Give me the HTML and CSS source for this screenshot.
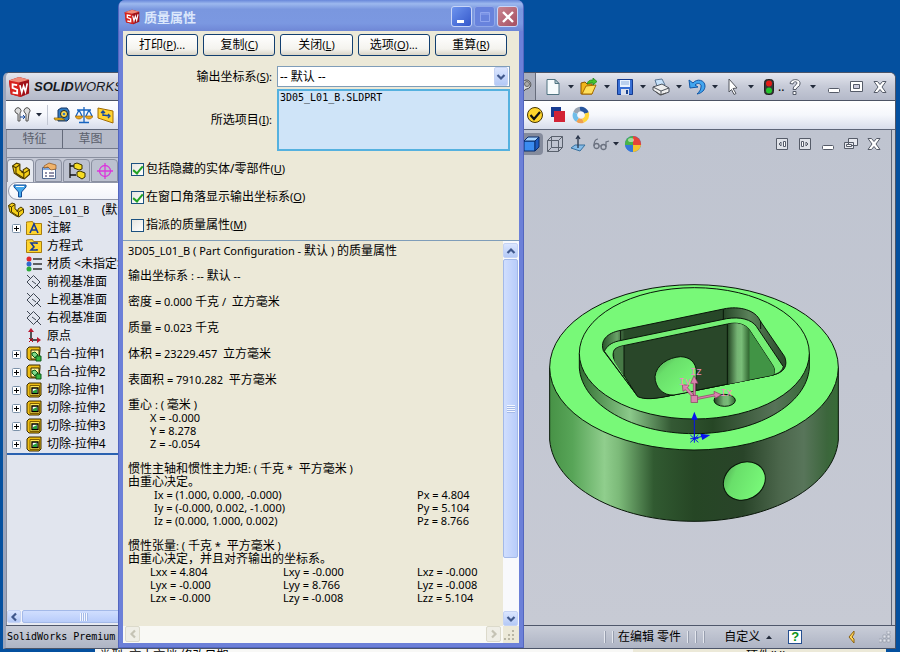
FILE: index.html
```html
<!DOCTYPE html>
<html lang="zh-CN">
<head>
<meta charset="utf-8">
<title>质量属性 - SolidWorks Premium</title>
<link rel="stylesheet" href="styles.css">
</head>
<body>
<svg class="defs" width="0" height="0" aria-hidden="true">
  <defs>
    <symbol id="sw" viewBox="0 0 24 24"><path d="M1 5 12 1l11 3v15l-9 4L3 20z" fill="#a01018"/><path d="M1 5 12 7l2 16L3 20z" fill="#d8211c"/><path d="M1 5 12 1l11 3-11 3z" fill="#f08a78"/><path d="M10 10 5 9v4l5 2v4l-5-1" fill="none" stroke="#fff" stroke-width="2"/><path d="m13 10 2 8 2-7 2 6 2-9" fill="none" stroke="#fff" stroke-width="1.800"/></symbol>
    <symbol id="caret" viewBox="0 0 6 4"><path d="M0 0h6L3 3.5z" fill="#222a3a"/></symbol>
    <symbol id="part" viewBox="0 0 16 16"><path d="M.5 3.500 4 1l3 1v5l3 2V7l3-2 2.500 2v4L11 15l-3-1-6-4z" fill="#f4cf19" stroke="#4d3b00"/><path d="m.5 3.500 3 1.500v5l7 4.500M3.500 5 7 2.500M10.500 14v-4l5-3M10.500 10 8 8.500" fill="none" stroke="#4d3b00"/></symbol>
    <symbol id="plus" viewBox="0 0 9 9"><rect x=".5" y=".5" width="8" height="8" rx="1" fill="#fff" stroke="#7b91a8"/><path d="M2 4.500h5M4.500 2v5" stroke="#000"/></symbol>
    <symbol id="plane" viewBox="0 0 16 16"><path d="m7.500 1.500 6.500 6.500-6.500 6.500L1 8zM1 1l4 4m6 6 4 4M6 7l4 3" fill="none" stroke="#404854"/></symbol>
    <symbol id="boss" viewBox="0 0 16 16"><path d="m1 3 2-2h11v3l-1 10H3l-2-2z" fill="#eebd13" stroke="#3b2a00"/><path d="M5 4h8v9H5z" fill="#fff5a0" stroke="#3b2a00"/><path d="m6 7 3-1 3 3-3 3-3-3z" fill="#7fd889" stroke="#0d5c18"/><path d="M10 10h5v5h-5z" fill="#37b545" stroke="#0d5c18"/></symbol>
    <symbol id="cut" viewBox="0 0 16 16"><path d="m1 3 2-2h12v12l-2 2H3l-2-2z" fill="#eebd13" stroke="#3b2a00"/><path d="M4 3.500h9.500v10H4z" fill="#ffe553" stroke="#806000"/><path d="M6 6h6v5.500H6z" fill="#fff" stroke="#000" stroke-width="1.300"/><path d="M7 11V9l4-2v4z" fill="#28a23a"/></symbol>
    <symbol id="chev" viewBox="0 0 10 10"><path d="m1.500 3 3.500 3.500L8.500 3" fill="none" stroke="currentColor" stroke-width="2.200"/></symbol>
    <symbol id="closex" viewBox="0 0 14 14"><path d="M1 1.500h3.500L7 4.500l2.500-3H13L9 7l4 5.500H9.500L7 9.500l-2.500 3H1L5 7z" fill="#fff" stroke="#555b68"/></symbol>
    <symbol id="minbar" viewBox="0 0 14 14"><rect x="1.500" y="8.500" width="11" height="4" rx="1" fill="#fff" stroke="#555b68"/></symbol>
  </defs>
</svg>

<div class="desktop">
  <main class="app">
    <header class="titlebar">
      <div class="brand"><svg class="i22"><use href="#sw"/></svg><span><b>SOLID</b>WORKS</span></div>
      <div class="quick">
        <button class="pin" aria-label="固定"><svg class="i16" viewBox="0 0 16 16"><path d="m2 14 4-5" stroke="#444" stroke-width="1.500"/><path d="M4 7c3-1 2-5 6-6 4 0 6 4 4 7-2 3-5 1-6 4-2 0-5-3-4-5z" fill="#ddd" stroke="#444"/><circle cx="11" cy="5" r="2.500" fill="#aaa" stroke="#666"/></svg></button>
        <button class="tool" aria-label="新建"><svg class="i18" viewBox="0 0 18 18"><path d="M3 1.500h8l4 4v11H3z" fill="#f6fbfd" stroke="#4e7280"/><path d="M11 1.500v4h4z" fill="#b9cfd6" stroke="#4e7280"/></svg><svg class="caret"><use href="#caret"/></svg></button>
        <button class="tool" aria-label="打开"><svg class="i18" viewBox="0 0 18 18"><path d="M1 16V5l4-1 2 2h5v10z" fill="#f2b619" stroke="#8d5700"/><path d="m2 16 4-8 10-1-4 9z" fill="#ffe05b" stroke="#a66b00"/><path d="M7 6c1-4 4-4 6-4V0l4 3.500L13 7V5C11 5 9 5 7 6z" fill="#44c22f" stroke="#168013" stroke-width=".7"/></svg><svg class="caret"><use href="#caret"/></svg></button>
        <button class="tool" aria-label="保存"><svg class="i18" viewBox="0 0 18 18"><path d="M1.500 1.500h15v15h-15z" fill="#386fd5" stroke="#133a90"/><path d="M4 2h10v7H4z" fill="#e8f2ff"/><path d="M5 4h8M5 6h8" stroke="#8cafdc"/><path d="M5 11h8v6H5z" fill="#dce1ec"/><path d="M10 12h2v4h-2z" fill="#19428f"/></svg><svg class="caret"><use href="#caret"/></svg></button>
        <button class="tool" aria-label="打印"><svg class="i18" viewBox="0 0 18 18"><path d="m5 8-2-6 7-1 3 6z" fill="#c6e1fa" stroke="#5b7694"/><path d="m1 9 9-3 7 4v4l-8 3-8-5z" fill="#eee" stroke="#4d525a"/><path d="m1 9 8 4 8-3M9 13v4" fill="none" stroke="#4d525a"/><path d="m4 14 4 3 6-2" fill="none" stroke="#555"/></svg><svg class="caret"><use href="#caret"/></svg></button>
        <button class="tool" aria-label="撤消"><svg class="i18" viewBox="0 0 18 18"><path d="m1 2 1 8 8-1-3-2c3-3 7-1 6 2 0 3-2 5-4 7 5-1 8-4 8-8 0-6-8-8-12-3z" fill="#42a5ee" stroke="#1256a5"/></svg><svg class="caret"><use href="#caret"/></svg></button>
        <button class="tool" aria-label="选择"><svg class="i18" viewBox="0 0 18 18"><path d="m5 1 8 9-4 .5 3 5-2 1-2.500-5L5 14z" fill="#fff" stroke="#51545c"/></svg><svg class="caret"><use href="#caret"/></svg></button>
        <button class="tool light" aria-label="重建模型"><svg class="i18" viewBox="0 0 18 18"><rect x="4.500" y="1.500" width="9" height="15" rx="3" fill="#353535" stroke="#222"/><circle cx="9" cy="5.500" r="3" fill="#e51b16"/><circle cx="9" cy="12.500" r="3" fill="#24c52e"/></svg><span>..</span></button>
        <button class="tool" aria-label="帮助"><svg class="i18" viewBox="0 0 18 18"><path d="M4 5.500C5 0 15 .5 14 6c0 3-4 3-4 5.500H7c0-4 4-4.500 4-6.500S7 3.500 7 6zM7 13.500h3v3H7z" fill="#fff" stroke="#555b68"/></svg><svg class="caret"><use href="#caret"/></svg></button>
        <button class="win" aria-label="最小化"><svg class="i14"><use href="#minbar"/></svg></button>
        <button class="win" aria-label="最大化"><svg class="i14" viewBox="0 0 14 14"><path d="M.5 1.500h12v10H.5z" fill="#fff" stroke="#555b68"/><path d="M3.500 4.500h6v4h-6z" fill="#ccd" stroke="#555b68"/></svg></button>
        <button class="win" aria-label="关闭程序"><svg class="i14"><use href="#closex"/></svg></button>
      </div>
    </header>

    <nav class="toolbar" aria-label="工具">
      <div class="tools-left">
        <svg class="i18" viewBox="0 0 18 18"><path d="M2 7a3 3 0 1 1 4 0v8H4V8zM11 7a3 3 0 1 1 4 0l-1 8h-2V8z" fill="#ddd" stroke="#555"/><path d="M6 11h5M9 9l2 2-2 2" fill="none" stroke="#164aa0"/></svg>
        <svg class="caret"><use href="#caret"/></svg>
        <i class="sep"></i>
        <svg class="i18" viewBox="0 0 18 18"><path d="m5 4 3-2h6l2 3v8l-2 2H5z" fill="#317bc2" stroke="#173665"/><circle cx="11" cy="8" r="3.500" fill="#ffdc4c" stroke="#222"/><circle cx="11" cy="8" r="1.300" fill="#327bc2"/><path d="M1 12h8l3 2H2z" fill="#ffc71b" stroke="#7d5500" stroke-width=".7"/></svg>
        <svg class="i18" viewBox="0 0 18 18"><path d="M9 1v15M4 16.500h10M2 4h14M4 4 1 10m3-6 3 6m7-6-3 6m3-6 3 6" fill="none" stroke="#1764c0" stroke-width="1.300"/><path d="M0 10h8c-1 4-7 4-8 0zm10 0h8c-1 4-7 4-8 0z" fill="#eca817" stroke="#865300" stroke-width=".6"/></svg>
        <svg class="i18" viewBox="0 0 18 18"><path d="m1 2 15 3v12L1 12z" fill="#ffd330" stroke="#a26b00"/><path d="M6 10V5M4 7l2-2 2 2M6 9l7 1m-2-2 2 2-2 2" fill="none" stroke="#164aa0" stroke-width="1.300"/></svg>
      </div>
      <div class="tools-right">
        <svg class="i18" viewBox="0 0 18 18"><circle cx="9" cy="9" r="7.500" fill="#ffd52b" stroke="#453400"/><path d="m4.500 9 3.500 4 6-7" fill="none" stroke="#111" stroke-width="2.200"/></svg>
        <svg class="i18" viewBox="0 0 18 18"><path d="M2 1h10v10H2z" fill="#173b91"/><path d="M5 5h11v11H5z" fill="#d32335"/></svg>
        <svg class="i18" viewBox="0 0 18 18"><g fill="none" stroke-width="4.500"><path d="M3.300 7A6 6 0 0 1 8 3" stroke="#9aa5b3"/><path d="M8 3.100a6 6 0 0 1 6.700 4" stroke="#27569e"/><path d="M14.700 7a6 6 0 0 1-3.700 7.600" stroke="#ffd63a"/><path d="M11 14.600a6 6 0 0 1-5.500-.7" stroke="#f0a050"/><path d="M5.500 13.900A6 6 0 0 1 3.300 7" stroke="#6fbde9"/></g></svg>
      </div>
    </nav>

    <div class="workspace">
      <aside class="side">
        <div class="cmdtabs"><button>特征</button><button>草图</button><button aria-label="更多"></button></div>
        <div class="gap"></div>
        <div class="paneltabs">
          <button class="on" aria-label="设计树"><svg class="i18"><use href="#part"/></svg></button>
          <button aria-label="属性"><svg class="i18" viewBox="0 0 18 18"><path d="M2.500 5.500h13v11h-13z" fill="#fff" stroke="#526b92"/><path d="M3 6h12v2H3z" fill="#81a9e0"/><path d="M5 11h2m2 0h5M5 14h2m2 0h5" stroke="#225"/><path d="m4 4 5-3 7 2v4l-5 1-3-3-4 1z" fill="#f0b36b" stroke="#8c531d" stroke-width=".7"/></svg></button>
          <button aria-label="配置"><svg class="i18" viewBox="0 0 18 18"><path d="M2 1v15m0-12h5m-5 9h6" stroke="#111" stroke-width="1.300"/><path d="m6 2 3-1 5 2v4l-3 1-5-2zM9 10l3-1 5 2v4l-3 2-5-3z" fill="#f6dc20" stroke="#3b3200"/></svg></button>
          <button aria-label="尺寸"><svg class="i18" viewBox="0 0 18 18"><circle cx="9" cy="9" r="5.500" fill="none" stroke="#db36db" stroke-width="1.300"/><path d="M9 1v16M1 9h16" stroke="#db36db" stroke-width="1.300"/></svg></button>
        </div>
        <div class="filter"><svg class="i14" viewBox="0 0 14 14"><path d="M1 1h12v2L8.500 8v5h-3V8L1 3z" fill="#43a7ea" stroke="#124b96"/><path d="M3 2.500h8" stroke="#fff"/></svg></div>
        <ul class="tree">
          <li class="root"><svg class="i16"><use href="#part"/></svg><span><span class="mono">3D05_L01_B</span>&nbsp;&nbsp;&nbsp;&nbsp;(默认)</span></li>
          <li><svg class="i9"><use href="#plus"/></svg><svg class="i16" viewBox="0 0 16 16"><path d="M.5 3.500V2l6-.5 1 2h8v11H.5z" fill="#ffd52e" stroke="#a77d10"/><path d="m4 13 4-9 4 9M5.500 10h5" fill="none" stroke="#163a9a" stroke-width="1.600"/></svg><span>注解</span></li>
          <li><i class="i9"></i><svg class="i16" viewBox="0 0 16 16"><path d="M.5 3.500V2l6-.5 1 2h8v11H.5z" fill="#ffd52e" stroke="#a77d10"/><path d="M11 6V5H5l3 4-3 3h6v-1" fill="none" stroke="#163a9a" stroke-width="1.600"/></svg><span>方程式</span></li>
          <li><i class="i9"></i><svg class="i16" viewBox="0 0 16 16"><circle cx="3" cy="3" r="2.500" fill="#e2262a"/><circle cx="3" cy="8" r="2.500" fill="#3269ce"/><circle cx="3" cy="13" r="2.500" fill="#2fac3b"/><path d="M7 3h9M7 8h9M7 13h9" stroke="#333" stroke-width="1.500"/></svg><span>材质 &lt;未指定&gt;</span></li>
          <li><i class="i9"></i><svg class="i16"><use href="#plane"/></svg><span>前视基准面</span></li>
          <li><i class="i9"></i><svg class="i16"><use href="#plane"/></svg><span>上视基准面</span></li>
          <li><i class="i9"></i><svg class="i16"><use href="#plane"/></svg><span>右视基准面</span></li>
          <li><i class="i9"></i><svg class="i16" viewBox="0 0 16 16"><path d="M5 3v9h8" fill="none" stroke="#222" stroke-width="1.500"/><path d="m5 0 3 4H2zM15 12l-4-3v6z" fill="#bb1b31"/><path d="m3 10 4 4m0-4-4 4" stroke="#b01"/></svg><span>原点</span></li>
          <li><svg class="i9"><use href="#plus"/></svg><svg class="i16"><use href="#boss"/></svg><span>凸台-拉伸1</span></li>
          <li><svg class="i9"><use href="#plus"/></svg><svg class="i16"><use href="#boss"/></svg><span>凸台-拉伸2</span></li>
          <li><svg class="i9"><use href="#plus"/></svg><svg class="i16"><use href="#cut"/></svg><span>切除-拉伸1</span></li>
          <li><svg class="i9"><use href="#plus"/></svg><svg class="i16"><use href="#cut"/></svg><span>切除-拉伸2</span></li>
          <li><svg class="i9"><use href="#plus"/></svg><svg class="i16"><use href="#cut"/></svg><span>切除-拉伸3</span></li>
          <li><svg class="i9"><use href="#plus"/></svg><svg class="i16"><use href="#cut"/></svg><span>切除-拉伸4</span></li>
        </ul>
        <div class="side-scroll"><span class="sbtn left"><svg class="i10"><use href="#chev"/></svg></span><span class="thumb grip-v"></span></div>
      </aside>

      <section class="viewport">
        <div class="viewbar">
          <button class="shaded" aria-label="上色"><svg class="i18" viewBox="0 0 18 18"><path d="M1 6h11v10H1z" fill="#3b8cf0" stroke="#092c6d"/><path d="m1 6 4-4h11l-4 4z" fill="#a6d4ff" stroke="#092c6d"/><path d="m12 6 4-4v10l-4 4z" fill="#1e5abf" stroke="#092c6d"/></svg></button>
          <button aria-label="线架图"><svg class="i18" viewBox="0 0 18 18"><path d="M1.500 5.500h11v11h-11zM5.500 1.500h11v11h-11zM1.500 5.500l4-4m7 4 4-4m-4 15 4-4M1.500 16.500l4-4" fill="none" stroke="#59606c"/></svg></button>
          <button aria-label="视向"><svg class="i18" viewBox="0 0 18 18"><path d="m2 13 4-3h10l-5 6z" fill="#85bce9" stroke="#38719e"/><path d="M9 13V2M7 4l2-3 2 3" fill="none" stroke="#29354a" stroke-width="1.300"/></svg></button>
          <button class="wide" aria-label="隐藏项目"><svg class="i18" viewBox="0 0 18 18"><circle cx="4.500" cy="11" r="2.500" fill="none" stroke="#6b7280" stroke-width="1.300"/><circle cx="11.500" cy="12" r="2.500" fill="none" stroke="#6b7280" stroke-width="1.300"/><path d="M2 11c0-4 1-7 4-7m8 8V7l3-1M7 11h2" fill="none" stroke="#6b7280" stroke-width="1.200"/></svg><svg class="caret"><use href="#caret"/></svg></button>
          <button aria-label="外观"><svg class="i18" viewBox="0 0 18 18"><circle cx="9" cy="9" r="8" fill="#3478da"/><path d="M9 10V1a8 8 0 0 1 8 9z" fill="#e64439"/><path d="M9 10V1a8 8 0 0 0-8 9z" fill="#48b449"/><path d="M9 10h8a8 8 0 0 1-8 7z" fill="#f4c42c"/><path d="M1 10h8v7a8 8 0 0 1-8-7z" fill="#3478da"/><ellipse cx="7" cy="5" rx="3" ry="2" fill="#fff" opacity=".5"/></svg></button>
          <div class="docbtns">
            <button aria-label="左侧"><svg class="i14" viewBox="0 0 14 14"><path d="M1.500 1.500h11v11h-11z" fill="#dfe2e8" stroke="#555b68"/><path d="M8.500 4.500h2v5h-2zM6 5 4 7l2 2z" fill="#fff" stroke="#555b68"/></svg></button>
            <button aria-label="右侧"><svg class="i14" viewBox="0 0 14 14"><path d="M1.500 1.500h11v11h-11z" fill="#dfe2e8" stroke="#555b68"/><path d="M3.500 4.500h2v5h-2zM8 5l2 2-2 2z" fill="#fff" stroke="#555b68"/></svg></button>
            <button aria-label="最小化文档"><svg class="i14"><use href="#minbar"/></svg></button>
            <button aria-label="还原文档"><svg class="i14" viewBox="0 0 14 14"><path d="M4.500 1.500h9v7h-9zM.5 5.500h9v6h-9z" fill="#e8eaf0" stroke="#555b68"/><path d="M2.500 7.500h5v2h-5z" fill="#fff" stroke="#555b68"/></svg></button>
            <button aria-label="关闭文档"><svg class="i14"><use href="#closex"/></svg></button>
          </div>
        </div>
        <svg class="model" viewBox="0 0 930 780" role="img" aria-label="零件模型">
          <defs>
            <linearGradient id="g1"><stop offset="0" stop-color="#479246"/><stop offset=".08" stop-color="#58a558"/><stop offset=".19" stop-color="#90ce8d"/><stop offset=".24" stop-color="#7cba79"/><stop offset=".36" stop-color="#315a31"/><stop offset=".5" stop-color="#264625"/><stop offset=".67" stop-color="#294429"/><stop offset=".8" stop-color="#4c674c"/><stop offset=".88" stop-color="#58755a"/><stop offset=".96" stop-color="#3c663c"/><stop offset="1" stop-color="#376b37"/></linearGradient>
            <linearGradient id="g2"><stop offset="0" stop-color="#326d32"/><stop offset=".12" stop-color="#63a362"/><stop offset=".22" stop-color="#8bc98a"/><stop offset=".4" stop-color="#345934"/><stop offset=".58" stop-color="#264625"/><stop offset=".85" stop-color="#577358"/><stop offset="1" stop-color="#356b36"/></linearGradient>
            <linearGradient id="g3"><stop offset="0" stop-color="#214021"/><stop offset=".45" stop-color="#75b374"/><stop offset=".65" stop-color="#79bd78"/><stop offset="1" stop-color="#2f652f"/></linearGradient>
            <linearGradient id="g4" x2="1" y2="1"><stop offset="0" stop-color="#4c9a4e"/><stop offset=".3" stop-color="#69df6a"/><stop offset="1" stop-color="#7dff7d"/></linearGradient>
            <linearGradient id="g5"><stop offset="0" stop-color="#2a552b"/><stop offset=".08" stop-color="#6aa368"/><stop offset=".12" stop-color="#294b29"/><stop offset=".66" stop-color="#274628"/><stop offset=".8" stop-color="#5b825a"/><stop offset="1" stop-color="#294829"/></linearGradient>
          </defs>
          <g stroke="#081608" stroke-width="3">
            <path d="M29 292v218c12 140 205 244 433 244s421-104 433-244V292z" fill="url(#g1)"/>
            <ellipse cx="462" cy="292" rx="433" ry="248" fill="#78f978"/>
            <path d="M118 250v44c8 110 160 197 345 197s337-87 345-197v-44z" fill="url(#g2)"/>
            <ellipse cx="463" cy="250" rx="345" ry="197" fill="#78f978"/>
            <path d="M190 242c-10-30 10-53 52-61l308-64c50-11 98 5 110 35l74 108c10 27 0 47-35 55l-305 61c-52 11-87 12-103 0z" fill="url(#g5)"/>
            <path d="M193 244c7-15 20-26 42-31l325-67c41-7 75 3 89 23l81 121c-4 14-14 20-31 25l-305 61c-52 11-87 12-103 0z" fill="#74ee74"/>
            <path d="M220 248c1-11 11-17 30-21l312-65c31-7 54 1 66 17l69 105c8 12 8 22 3 31l-306 61c-50 12-80 13-101 4l-68-106c-5-9-7-18-5-26z" fill="#294729"/>
            <path d="M562 162c31-7 54 1 66 17v151l-66 13z" fill="url(#g3)" stroke="none"/>
            <path d="M628 179l69 105c8 12 8 22 3 31l-72 14z" fill="#419445" stroke="none"/>
            <path d="M222 246c2-10 12-15 30-19v92l-28-42z" fill="#477a46" stroke="none"/>
            <path d="M252 227v91M562 162v181M242 181v30M550 118v30M662 152v25" fill="none"/>
            <path d="M345 320c3-35 40-58 77-60 29 1 45 18 47 43l-2 60-65 12c-34 3-57-24-57-55z" fill="url(#g4)"/>
            <ellipse cx="554" cy="391" rx="32" ry="18" fill="url(#g3)"/>
            <ellipse cx="613" cy="633" rx="65" ry="55" transform="rotate(-28 613 633)" fill="url(#g4)"/>
          </g>
          <g stroke="#8c3561" fill="#d983ae" stroke-width="2"><path d="M460 385v-45h-8l10-23 12 23h-8v45zM468 383l55-11-1-8 22 10-18 11-2-7-55 11zM458 382l-22-23-7 5-2-20 20 2-5 7 20 22z"/><rect x="453" y="377" width="20" height="20"/></g>
          <g class="axis"><text x="450" y="316">Iz</text><text x="416" y="346">Iy</text><text x="541" y="379">Ix</text></g>
          <path d="M463 505v-60M463 505l28-7M451 495l24 22m0-22-24 22m0-11h24m-12-12v24" stroke="#0712ee" stroke-width="3"/><path d="m463 425 10 24h-19zM511 495l-30-4 6 19z" fill="#0712ee"/>
        </svg>
      </section>
    </div>

    <footer class="status">
      <span class="mono product">SolidWorks Premium</span>
      <div class="state"><i class="rule"></i><i class="rule"></i><span>在编辑 零件</span><i class="rule"></i><i class="rule"></i><i class="rule"></i></div>
      <button class="custom">自定义 <svg class="caret flip"><use href="#caret"/></svg></button>
      <button class="help" aria-label="快速提示">?</button>
      <svg class="moon" viewBox="0 0 8 14"><path d="M6 1 1 7l5 6V9L4 7l2-3z" fill="#ffd457" stroke="#8b6212"/></svg>
      <svg class="grip" viewBox="0 0 12 12"><path d="M8 0h3v3H8zM4 4h3v3H4zM8 4h3v3H8zM0 8h3v3H0zM4 8h3v3H4zM8 8h3v3H8z" fill="#dfe2ea" stroke="#8d93a3" stroke-width=".6"/></svg>
    </footer>
  </main>
  <div class="behind"><span>类型: 文本文档 修改日期</span><span>硬件(H)</span></div>

  <section class="dialog" role="dialog" aria-labelledby="dlg-title">
    <header class="dlg-title">
      <svg class="i16"><use href="#sw"/></svg><h1 id="dlg-title">质量属性</h1>
      <button class="xp" aria-label="最小化"><svg class="i18" viewBox="0 0 18 18"><path d="M4 12h7v3H4z" fill="#fff"/></svg></button>
      <button class="xp off" aria-label="最大化" disabled><svg class="i18" viewBox="0 0 18 18"><path d="M4.500 4.500h9v9h-9zM4 6h10" fill="none" stroke="#8fa5ee"/></svg></button>
      <button class="xp close" aria-label="关闭"><svg class="i18" viewBox="0 0 18 18"><path d="m4 4 10 10M14 4 4 14" stroke="#fff" stroke-width="2.400"/></svg></button>
    </header>
    <div class="dlg-body">
      <div class="actions">
        <button>打印<small>(<u>P</u>)...</small></button><button>复制<small>(<u>C</u>)</small></button><button>关闭<small>(<u>L</u>)</small></button><button>选项<small>(<u>O</u>)...</small></button><button>重算<small>(<u>R</u>)</small></button>
      </div>
      <div class="form">
        <label for="cs">输出坐标系<small>(<u>S</u>):</small></label>
        <div class="combo"><select id="cs"><option>-- 默认 --</option></select><span class="drop"><svg class="i10"><use href="#chev"/></svg></span></div>
        <label for="items">所选项目<small>(<u>I</u>):</small></label>
        <textarea id="items" class="mono" readonly>3D05_L01_B.SLDPRT</textarea>
      </div>
      <div class="checks">
        <label><input type="checkbox" checked><span>包括隐藏的实体/零部件<small>(<u>U</u>)</small></span></label>
        <label><input type="checkbox" checked><span>在窗口角落显示输出坐标系<small>(<u>O</u>)</small></span></label>
        <label><input type="checkbox"><span>指派的质量属性<small>(<u>M</u>)</small></span></label>
      </div>
      <div class="results">
        <div class="report">
          <p><small>3D05_L01_B ( Part Configuration - </small>默认<small> ) </small>的质量属性</p>
          <div class="facts">
            <p>输出坐标系<small> : -- </small>默认<small> --</small></p>
            <p>密度<small> = 0.000 </small>千克<small> /  </small>立方毫米</p>
            <p>质量<small> = 0.023 </small>千克</p>
            <p>体积<small> = 23229.457  </small>立方毫米</p>
            <p>表面积<small> = 7910.282  </small>平方毫米</p>
          </div>
          <div>
            <p>重心<small> : ( </small>毫米<small> )</small></p>
            <div class="vals"><span>X = -0.000</span><span></span><span></span><span>Y = 8.278</span><span></span><span></span><span>Z = -0.054</span></div>
          </div>
          <div>
            <p>惯性主轴和惯性主力矩<small>: ( </small>千克<small> *  </small>平方毫米<small> )</small></p>
            <p>由重心决定。</p>
            <div class="vals axes"><span>Ix = (1.000, 0.000, -0.000)</span><span>Px = 4.804</span><span>Iy = (-0.000, 0.002, -1.000)</span><span>Py = 5.104</span><span>Iz = (0.000, 1.000, 0.002)</span><span>Pz = 8.766</span></div>
          </div>
          <div>
            <p>惯性张量<small>: ( </small>千克<small> *  </small>平方毫米<small> )</small></p>
            <p>由重心决定，并且对齐输出的坐标系。</p>
            <div class="vals"><span>Lxx = 4.804</span><span>Lxy = -0.000</span><span>Lxz = -0.000</span><span>Lyx = -0.000</span><span>Lyy = 8.766</span><span>Lyz = -0.008</span><span>Lzx = -0.000</span><span>Lzy = -0.008</span><span>Lzz = 5.104</span></div>
          </div>
        </div>
        <div class="vscroll"><span class="sbtn"><svg class="i10 flip"><use href="#chev"/></svg></span><span class="thumb grip-h"></span><span class="sbtn"><svg class="i10"><use href="#chev"/></svg></span></div>
        <div class="hscroll"><span class="sbtn dis left"><svg class="i10"><use href="#chev"/></svg></span><span class="sbtn dis right"><svg class="i10"><use href="#chev"/></svg></span></div>
        <svg class="grip" viewBox="0 0 12 12"><path d="M9 1h2v2H9zM5 5h2v2H5zM9 5h2v2H9zM1 9h2v2H1zM5 9h2v2H5zM9 9h2v2H9z" fill="#b9b6a4"/></svg>
      </div>
    </div>
  </section>
</div>
</body>
</html>
```
FILE: styles.css
```css
* { box-sizing: border-box; }
body { margin: 0; font: 12px/18px "Noto Sans", "Noto Sans CJK SC", sans-serif; color: #000; }
button { margin: 0; padding: 0; border: 0; background: none; font: inherit; color: inherit; }
svg { display: block; flex: none; }
p, h1, ul { margin: 0; padding: 0; }
small { font-size: 11px; }
.defs { position: absolute; }
.mono { font: 10px/18px "DejaVu Sans Mono", monospace; }

.i9 { width: 9px; height: 9px; }
.i10 { width: 10px; height: 10px; }
.i14 { width: 14px; height: 14px; }
.i16 { width: 16px; height: 16px; }
.i18 { width: 18px; height: 18px; }
.i22 { width: 22px; height: 22px; }
.caret { width: 6px; height: 4px; }
.flip { transform: rotate(180deg); }

.desktop { position: relative; height: 100vh; display: flex; flex-direction: column; overflow: hidden; background: #04509f; padding: 72px 4px 0 3px; }

/* Main application window */
.app { flex: 1; min-height: 0; display: flex; flex-direction: column; border: 1px solid #4b5468; border-left: 3px solid #9aa4bb; border-radius: 6px 6px 0 0; overflow: hidden; background: #c4c8d2; }
.titlebar { flex: none; height: 28px; display: flex; align-items: center; justify-content: space-between; background: linear-gradient(#e4e6ee, #c6cad7 50%, #b4b9c9); border-bottom: 1px solid #4c5364; }
.brand { display: flex; align-items: center; gap: 4px; padding-left: 2px; font: italic 13px/20px "Liberation Sans", sans-serif; color: #15171c; }
.quick { display: flex; align-items: center; height: 100%; padding-right: 4px; }
.quick button { display: flex; align-items: center; height: 100%; }
.pin { width: 20px; margin-right: 8px; background: #a9aebd; border-right: 1px solid #666c7b; }
.tool { width: 36px; gap: 6px; }
.quick .light { width: 26px; gap: 0; }
.quick .win { width: 23px; justify-content: center; }
.toolbar { flex: none; height: 29px; display: grid; grid-template-columns: 520px 1fr; align-items: center; background: linear-gradient(#fff, #f5f7fc 50%, #d8ddeb); border-bottom: 1px solid #5d6578; }
.tools-left, .tools-right { display: flex; align-items: center; gap: 5px; }
.tools-left { padding-left: 8px; gap: 4px; }
.sep { width: 1px; height: 20px; margin: 0 1px; background: #c2c7d3; }

.workspace { flex: 1; min-height: 0; display: flex; }
.side { flex: 0 0 514px; display: flex; flex-direction: column; background: #e1e5ee; border-left: 1px solid #858b9b; }
.cmdtabs { flex: none; height: 19px; display: flex; background: #b5bac8; border-bottom: 1px solid #747a8a; color: #5b606c; }
.cmdtabs button { width: 56px; border-right: 1px solid #646a7a; }
.gap { flex: none; height: 9px; background: #c4c8d5; border-bottom: 1px solid #8a90a0; }
.paneltabs { flex: none; height: 24px; display: flex; gap: 1px; background: #c4c8d5; padding-top: 1px; }
.paneltabs button { width: 27px; display: flex; align-items: center; justify-content: center; border: 1px solid #8a90a0; border-radius: 4px 4px 0 0; background: #bcc1cf; }
.paneltabs .on { background: #e6e9f0; border-bottom: 0; }
.filter { flex: none; height: 18px; margin: 0 0 1px 1px; padding-left: 4px; display: flex; align-items: center; background: linear-gradient(#fff, #f2f4fa); border: 1px solid #9096a8; border-radius: 9px; }
.tree { flex: none; list-style: none; border-bottom: 2px solid #2a62b1; }
.tree li { height: 18px; display: flex; align-items: center; gap: 5px; padding-left: 5px; white-space: nowrap; }
.tree .root { padding-left: 1px; }
.side-scroll { flex: none; margin-top: auto; height: 15px; display: flex; gap: 1px; background: #f2f4fb; border-bottom: 2px solid #e7eaf2; }
.side-scroll .thumb { width: 124px; }

.viewport { flex: 1; min-width: 0; margin-right: 3px; border-right: 1px solid #5d6578; background: linear-gradient(#bfc4d0, #c7cad4); }
.viewbar { display: flex; align-items: center; height: 28px; }
.viewbar button { width: 23px; height: 22px; display: flex; align-items: center; justify-content: center; }
.viewbar .shaded { background: #848b9c; border-radius: 4px; }
.viewbar .wide { width: 32px; gap: 3px; }
.docbtns { display: flex; margin-left: auto; padding-right: 6px; }
.model { width: 310px; height: 260px; margin: 112px auto 0 20px; }
.axis { font: 30px "Liberation Mono", monospace; fill: #f08cc0; }

.status { flex: none; height: 23px; display: flex; align-items: center; border-top: 1px solid #4f576b; background: linear-gradient(#c9cdd8, #aeb4c4); }
.product { width: 596px; padding-left: 1px; }
.state { display: flex; align-items: center; gap: 4px; white-space: nowrap; }
.rule { width: 2px; height: 12px; background: #e4e7ee; border-right: 1px solid #979eae; margin-left: 2px; }
.custom { display: flex; align-items: center; gap: 6px; margin-left: 19px; white-space: nowrap; }
.help { width: 14px; height: 14px; margin-left: 16px; border: 1px solid #254f90; background: #fff; color: #0a9417; font: bold 13px/12px "Liberation Sans", sans-serif; }
.moon { width: 8px; height: 14px; margin-left: auto; }
.status .grip { width: 12px; height: 12px; margin: 0 4px 0 23px; }

/* Top edge of the window that shows under the application */
.behind { flex: none; height: 3px; display: flex; justify-content: space-between; overflow: hidden; margin: 0 10px 0 92px; padding: 0 100px 0 4px; background: linear-gradient(90deg, #f8f8f6 68%, #ece9d8 68%); white-space: nowrap; line-height: 14px; }

/* Mass properties window, floating over the application */
.dialog { position: absolute; left: 118px; top: 0; width: 406px; bottom: 4px; display: flex; flex-direction: column; padding: 0 4px 4px; background: #6c80d8; border: 1px solid #5366bf; border-top: 0; border-radius: 7px 7px 0 0; }
.dlg-title { flex: none; height: 31px; margin: 0 -4px; padding: 2px 5px 0 5px; display: flex; align-items: center; gap: 2px; border-radius: 6px 6px 0 0; background: linear-gradient(#6887da, #9cb8ee 12%, #7a97df 30%, #7b98e1 75%, #6f87d6); }
.dlg-title h1 { flex: 1; margin-left: 2px; font: bold 13px/20px "Noto Sans CJK SC", sans-serif; color: #dbe7fb; }
.xp { width: 21px; height: 21px; display: flex; align-items: center; justify-content: center; border: 1px solid #c9d6f8; border-radius: 3px; background: linear-gradient(135deg, #6d94ee, #3558cb); }
.xp.off { border-color: #91a8e8; background: #6883dd; }
.xp.close { background: linear-gradient(135deg, #c98590, #a64f62); }
.dlg-body { flex: 1; min-height: 0; display: flex; flex-direction: column; background: #ece9d8; }
.actions { display: grid; grid-template-columns: repeat(5, 1fr); gap: 5px; padding: 3px 12px 0 3px; }
.actions button { height: 22px; border: 1px solid #123f70; border-radius: 3px; background: linear-gradient(#fff, #f4f3ee 70%, #d9d5c8); white-space: nowrap; }
.form { display: grid; grid-template-columns: 149px 1fr; column-gap: 5px; row-gap: 2px; align-items: center; padding: 10px 9px 0 0; }
.form label { text-align: right; }
.combo { display: flex; height: 21px; border: 1px solid #7f9db9; background: #fff; padding-right: 1px; }
.combo select { flex: 1; appearance: none; border: 0; background: #fff; padding: 0 2px; font: inherit; line-height: 18px; color: #000; }
.drop, .sbtn { flex: none; display: flex; align-items: center; justify-content: center; width: 14px; color: #40588c; background: linear-gradient(#dbe6ff, #b4c9f6); border: 1px solid #c5d3f4; border-radius: 2px; }
.form textarea { display: block; width: 100%; height: 62px; padding: 0 1px; line-height: 14px; resize: none; border: 2px solid #55b1df; background: #cfe4f8; color: #000; }
.checks { display: flex; flex-direction: column; gap: 10px; padding: 9px 0 6px 8px; }
.checks label { display: flex; align-items: center; gap: 2px; }
.checks input { appearance: none; width: 13px; height: 13px; margin: 0; border: 1px solid #1c5180; background: linear-gradient(135deg, #e6e5df, #fff); display: flex; justify-content: center; align-items: flex-start; }
.checks input:checked::before { content: ""; width: 4px; height: 8px; border: solid #21a121; border-width: 0 2px 2px 0; transform: rotate(40deg); }
.results { flex: 1; min-height: 0; display: grid; grid-template-columns: 1fr 16px; grid-template-rows: 1fr 17px; border-top: 1px solid #7f9db9; }
.report { padding: 3px 0 0 5px; display: flex; flex-direction: column; gap: 12px; line-height: 13px; overflow: hidden; }
.report p { height: 13px; }
.report p, .vals span { white-space: pre; }
.facts { display: flex; flex-direction: column; gap: 13px; }
.vals { display: grid; grid-template-columns: 133px 134px 1fr; grid-auto-rows: 13px; padding-left: 22px; font-size: 11px; }
.vals.axes { grid-template-columns: 263px 1fr; padding-left: 26px; }
.vscroll { display: flex; flex-direction: column; gap: 1px; padding: 2px 1px 0 0; background: #f8f9fc; }
.vscroll .sbtn { height: 15px; width: 15px; }
.vscroll .thumb { height: 299px; margin-bottom: auto; }
.thumb { display: flex; align-items: center; justify-content: center; border: 1px solid #a3b9e8; border-radius: 2px; background: linear-gradient(90deg, #d0defe, #b8ccfa); }
.side-scroll .thumb { background: linear-gradient(#d0defe, #b8ccfa); }
.thumb::before { content: ""; width: 8px; height: 8px; }
.grip-v::before { background: repeating-linear-gradient(90deg, #f3f7ff 0 1px, #a5bae8 1px 2px); }
.grip-h::before { background: repeating-linear-gradient(#f3f7ff 0 1px, #a5bae8 1px 2px); }
.sbtn.left svg { transform: rotate(90deg); }
.sbtn.right svg { transform: rotate(-90deg); }
.hscroll { display: flex; justify-content: space-between; padding: 0 2px 1px; background: #f9f9f5; }
.sbtn.dis { width: 15px; color: #c5c3b5; background: #efeee6; border-color: #dcdacb; }
.results .grip { width: 12px; height: 12px; align-self: center; }
```
